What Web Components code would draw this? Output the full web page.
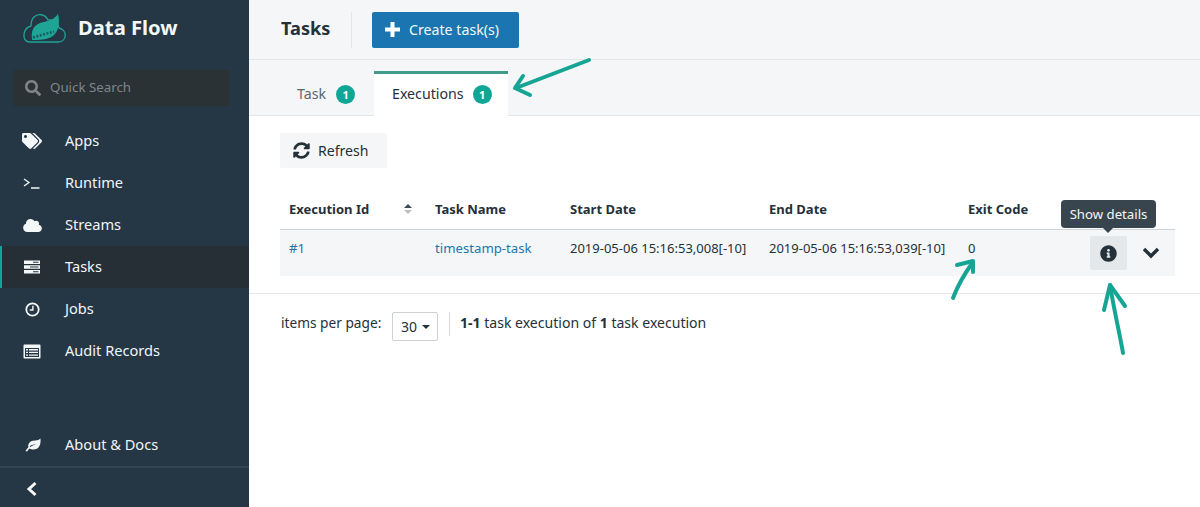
<!DOCTYPE html>
<html>
<head>
<meta charset="utf-8">
<title>Data Flow</title>
<style>
    html, body { margin: 0; height: 100%; }
    body { font-family: "Noto Sans", "Open Sans", sans-serif; overflow: hidden; }
</style>
</head>
<body>
<dataflow-app>
    <side-bar slot="side">
        <nav-item label="Apps" icon="tags"></nav-item>
        <nav-item label="Runtime" icon="terminal"></nav-item>
        <nav-item label="Streams" icon="cloud"></nav-item>
        <nav-item label="Tasks" icon="tasks" active></nav-item>
        <nav-item label="Jobs" icon="clock"></nav-item>
        <nav-item label="Audit Records" icon="list"></nav-item>
        <nav-item slot="bottom" label="About &amp; Docs" icon="leaf"></nav-item>
    </side-bar>
    <task-page slot="main"></task-page>
    <note-arrows slot="main"></note-arrows>
</dataflow-app>

<script>
const ICONS = {
    tags: '<svg viewBox="0 0 640 512" width="20" height="16" fill="currentColor"><path d="M497.941 225.941L286.059 14.059A48 48 0 0 0 252.118 0H48C21.49 0 0 21.49 0 48v204.118a48 48 0 0 0 14.059 33.941l211.882 211.882c18.744 18.745 49.136 18.746 67.882 0l204.118-204.118c18.745-18.745 18.745-49.137 0-67.882zM112 160c-26.51 0-48-21.49-48-48s21.49-48 48-48 48 21.49 48 48-21.49 48-48 48zm513.941 133.823L421.823 497.941c-18.745 18.745-49.137 18.745-67.882 0l-.36-.36L527.64 323.522c16.999-16.999 26.36-39.6 26.36-63.64s-9.362-46.641-26.36-63.64L331.397 0h48.721a48 48 0 0 1 33.941 14.059l211.882 211.882c18.745 18.745 18.745 49.137 0 67.882z"/></svg>',
    terminal: '<svg viewBox="0 0 18 14" width="18" height="14" fill="none" stroke="currentColor" stroke-width="1.3"><path d="M1 3l5 3.5L1 10M8 12h8.5"/></svg>',
    cloud: '<svg viewBox="0 0 640 512" width="19" height="15" fill="currentColor"><path d="M537.6 226.6c4.1-10.7 6.4-22.4 6.4-34.6 0-53-43-96-96-96-19.7 0-38.1 6-53.3 16.2C367 64.2 315.3 32 256 32c-88.4 0-160 71.6-160 160 0 2.7.1 5.4.2 8.1C40.2 219.8 0 273.2 0 336c0 79.5 64.5 144 144 144h368c70.7 0 128-57.3 128-128 0-61.9-44-113.6-102.4-125.4z"/></svg>',
    tasks: '<svg viewBox="0 0 18 14" width="18" height="14" fill="currentColor"><path d="M1 .5h16v3.4H1zM1 5.3h16v3.4H1zM1 10.1h16v3.4H1z"/><path d="M10 1.7h5.5v1H10zM7 6.5h8.5v1H7zM10 11.3h5.5v1H10z" fill="#253745"/></svg>',
    clock: '<svg viewBox="0 0 16 16" width="15" height="15" fill="none" stroke="currentColor"><circle cx="8" cy="8" r="6.6" stroke-width="1.9"/><path d="M8.4 4v4.6H5" stroke-width="1.5"/></svg>',
    list: '<svg viewBox="0 0 18 15" width="18" height="15" fill="currentColor"><path fill-rule="evenodd" d="M1.5 .5h15a1 1 0 0 1 1 1v12a1 1 0 0 1-1 1h-15a1 1 0 0 1-1-1v-12a1 1 0 0 1 1-1zM2 4v9h14V4z"/><path d="M3 5h2v1.4H3zM6 5h9v1.4H6zM3 7.7h2v1.4H3zM6 7.7h9v1.4H6zM3 10.4h2v1.4H3zM6 10.4h9v1.4H6z"/></svg>',
    leaf: '<svg viewBox="0 0 18 15" width="17" height="14" fill="currentColor"><path fill-rule="evenodd" d="M17.5 .5c.6 5-.6 9.8-4.6 11.3-2.7 1-5.3.4-7-.6-.9.8-1.9 1.9-2.7 3.3l-1.7-.5c.8-1.5 2-3 3.1-4.1C3.8 6.5 6 3.5 9.5 2.9c3-.5 6 0 8-2.4zM6.8 9.7c1.8-1.5 4.2-2.7 6.7-3.2-2.7.1-5.5 1-7.6 2.4z"/></svg>'
};

class DataflowApp extends HTMLElement {
    connectedCallback() {
        this.attachShadow({ mode: 'open' });
        this.shadowRoot.innerHTML = `
            <style>
                :host { display: grid; grid-template-columns: 249px 1fr; height: 507px; overflow: hidden; }
                .main { position: relative; min-width: 0; background: #fff; }
            </style>
            <slot name="side"></slot>
            <div class="main"><slot name="main"></slot></div>
        `;
    }
}

class SideBar extends HTMLElement {
    connectedCallback() {
        this.attachShadow({ mode: 'open' });
        this.shadowRoot.innerHTML = `
            <style>
                :host { display: flex; flex-direction: column; height: 507px; background: #253745; color: #f1f5f7; }
                .brand { display: flex; align-items: center; gap: 11px; height: 56px; padding-left: 21px; font-size: 20.2px; font-weight: 700; color: #f4f7f8; }
                .brand span { padding-bottom: 2px; }
                .search { display: flex; align-items: center; gap: 9px; height: 36px; margin: 14px 20px 14px 13px; padding-left: 12px; background: #2a3236; border-radius: 2px; color: #7f8588; font-size: 13.3px; }
                .search svg { display: block; }
                .search span { padding-bottom: 2px; }
                .nav { flex: 1; }
                .bottom { height: 42px; }
                .collapse { display: flex; align-items: center; height: 39px; padding-left: 26px; border-top: 2px solid #34434f; }
                .collapse svg { margin-top: 2px; }
            </style>
            <div class="brand">
                <svg width="46" height="32" viewBox="0 0 46 32">
                    <path d="M8 30h29c9 0 10-12 1-14-1-6-6-9-11-8C24 2 17 1 13 5c-3 3-3 6-3 9-8 2-10 15-2 16z" fill="none" stroke="#1ea595" stroke-width="1.3"/>
                    <path d="M37 2c2 8 1 16-4 21-4 4-11 5-21 5-1 0-1 0-1-1-1-8 1-13 8-16 7-2 13-2 18-9z" fill="#1ea595"/>
                    <path d="M12 25.5l21-6" stroke="#1c5a5e" stroke-width="2.5" stroke-dasharray="2 1.5"/>
                </svg>
                <span>Data Flow</span>
            </div>
            <div class="search">
                <svg viewBox="0 0 512 512" width="16" height="16" fill="currentColor"><path d="M505 442.7L405.3 343c-4.5-4.5-10.6-7-17-7H372c27.6-35.3 44-79.7 44-128C416 93.1 322.9 0 208 0S0 93.1 0 208s93.1 208 208 208c48.3 0 92.7-16.4 128-44v16.3c0 6.4 2.5 12.5 7 17l99.7 99.7c9.4 9.4 24.6 9.4 33.9 0l28.3-28.3c9.4-9.4 9.4-24.6.1-34zM208 336c-70.7 0-128-57.2-128-128 0-70.7 57.2-128 128-128 70.7 0 128 57.2 128 128 0 70.7-57.2 128-128 128z"/></svg>
                <span>Quick Search</span>
            </div>
            <div class="nav"><slot></slot></div>
            <div class="bottom"><slot name="bottom"></slot></div>
            <div class="collapse">
                <svg width="12" height="16" viewBox="0 0 12 16" fill="none" stroke="#f4f7f8" stroke-width="3"><path d="M9.5 2L3 8l6.5 6"/></svg>
            </div>
        `;
    }
}

class NavItem extends HTMLElement {
    connectedCallback() {
        this.attachShadow({ mode: 'open' });
        this.shadowRoot.innerHTML = `
            <style>
                :host { display: flex; align-items: center; height: 42px; font-size: 14.6px; border-left: 2px solid transparent; }
                :host([active]) { background: #252f35; border-left-color: #12a594; }
                .icon { display: flex; justify-content: center; width: 20px; margin-left: 20px; margin-right: 23px; color: #f4f7f8; }
                .text { padding-bottom: 3px; }
            </style>
            <span class="icon">${ICONS[this.getAttribute('icon')]}</span>
            <span class="text">${this.getAttribute('label').replace('&', '&amp;')}</span>
        `;
    }
}

class CountBadge extends HTMLElement {
    connectedCallback() {
        this.attachShadow({ mode: 'open' });
        this.shadowRoot.innerHTML = `
            <style>
                :host { display: inline-flex; align-items: center; justify-content: center; width: 19px; height: 19px; border-radius: 50%; background: #0fa697; color: #fff; font-size: 11px; font-weight: 700; }
            </style>
            <slot></slot>
        `;
    }
}

class TaskPage extends HTMLElement {
    connectedCallback() {
        this.attachShadow({ mode: 'open' });
        this.shadowRoot.innerHTML = `
            <style>
                :host { display: block; color: #253139; font-size: 14px; }
                a { color: #2376ab; text-decoration: none; font-size: 13.2px; }
                .top { display: flex; align-items: center; height: 59px; padding-left: 32px; background: #f5f6f7; border-bottom: 1px solid #e3e6e8; }
                .top h1 { margin: 0 0 3px; width: 70px; font-size: 18.2px; font-weight: 700; color: #253139; }
                .sep { width: 1px; height: 36px; background: #e3e6e8; margin-right: 20px; }
                .create { display: flex; align-items: center; gap: 9px; width: 147px; height: 36px; box-sizing: border-box; padding-left: 13px; background: #1b75b0; border-radius: 2px; color: #f3f8fb; font-size: 14.2px; }
                .tabs { display: flex; align-items: flex-end; height: 55px; padding-left: 31px; background: #f5f6f7; border-bottom: 1px solid #e3e6e8; }
                .tab { display: flex; align-items: center; height: 41px; gap: 10px; color: #5c666d; font-size: 14.2px; box-sizing: border-box; }
                .tab span { margin-bottom: 2px; }
                .tab.task { width: 94px; padding-left: 17px; }
                .tab.on { position: relative; top: 1px; width: 134px; height: 45px; padding-left: 18px; gap: 9px; background: #fff; border-top: 3px solid #409b8b; color: #253139; padding-bottom: 1px; }
                .body { padding: 17px 25px 0 31px; }
                .refresh { display: flex; align-items: center; gap: 8px; width: 107px; height: 35px; box-sizing: border-box; padding-left: 13px; padding-bottom: 1px; background: #f5f6f7; border-radius: 2px; font-size: 14.1px; color: #253139; }
                .row { display: grid; grid-template-columns: 146px 135px 199px 199px 1fr; padding-left: 9px; white-space: nowrap; }
                .head { margin-top: 22px; padding-bottom: 1px; box-sizing: border-box; height: 40px; align-items: center; font-weight: 700; font-size: 13px; border-bottom: 1px solid #cfd4d8; }
                .id { display: flex; align-items: center; }
                .sort { margin-left: 34px; }
                .data { position: relative; height: 37px; padding-top: 9px; background: #f4f6f7; font-size: 13px; }
                .info { position: absolute; left: 810px; top: 6px; display: flex; align-items: center; justify-content: center; width: 37px; height: 34px; background: #e4e8ea; border-radius: 2px; }
                .more { position: absolute; left: 862px; top: 17px; display: block; }
                .tip { position: absolute; left: 781px; top: -30px; box-sizing: border-box; width: 95px; height: 28px; display: flex; align-items: center; justify-content: center; background: #38454f; border-radius: 4px; color: #f3f5f6; font-size: 13.2px; }
                .tip::after { content: ""; position: absolute; left: 42px; bottom: -5px; border: 5px solid transparent; border-bottom: 0; border-top-color: #38454f; }
                .rule { height: 1px; margin-top: 17px; background: #e6e8ea; }
                .pager { display: flex; align-items: flex-start; padding: 18px 0 0 32px; font-size: 14px; }
                .pager span.lbl { width: 111px; height: 24px; line-height: 22px; font-size: 13.7px; }
                .select { display: flex; align-items: center; gap: 5px; width: 46px; height: 29px; box-sizing: border-box; padding-left: 8px; border: 1px solid #cdd1d4; border-radius: 2px; margin-right: 11px; font-size: 14px; }
                .select i { border: 4px solid transparent; border-bottom: 0; border-top-color: #253139; }
                .bar { width: 1px; height: 24px; background: #d9dcde; margin-right: 10px; }
                .count { height: 24px; line-height: 22px; font-size: 14.05px; }
            </style>
            <div class="top">
                <h1>Tasks</h1>
                <span class="sep"></span>
                <div class="create">
                    <svg width="15" height="15" viewBox="0 0 15 15" fill="#fff"><path d="M5.5 0h4v5.5H15v4H9.5V15h-4V9.5H0v-4h5.5z"/></svg>
                    <span>Create task(s)</span>
                </div>
            </div>
            <div class="tabs">
                <div class="tab task"><span>Task</span><count-badge>1</count-badge></div>
                <div class="tab on"><span>Executions</span><count-badge>1</count-badge></div>
            </div>
            <div class="body">
                <div class="refresh">
                    <svg viewBox="0 0 512 512" width="17" height="17" fill="#253139"><path d="M370.72 133.28C339.458 104.008 298.888 87.962 255.848 88c-77.458.068-144.328 53.178-162.791 126.85-1.344 5.363-6.122 9.15-11.651 9.15H24.103c-7.498 0-13.194-6.807-11.807-14.176C33.933 94.924 134.813 8 256 8c66.448 0 126.791 26.136 171.315 68.685L463.03 40.97C478.149 25.851 504 36.559 504 57.941V192c0 13.255-10.745 24-24 24H345.941c-21.382 0-32.09-25.851-16.971-40.971l41.75-41.749zM32 296h134.059c21.382 0 32.09 25.851 16.971 40.971l-41.75 41.75c31.262 29.273 71.835 45.319 114.876 45.28 77.418-.07 144.315-53.144 162.787-126.849 1.344-5.363 6.122-9.15 11.651-9.15h57.304c7.498 0 13.194 6.807 11.807 14.176C478.067 417.076 377.187 504 256 504c-66.448 0-126.791-26.136-171.315-68.685L48.97 471.03C33.851 486.149 8 475.441 8 454.059V320c0-13.255 10.745-24 24-24z"/></svg>
                    <span>Refresh</span>
                </div>
                <div class="row head">
                    <div class="id"><span>Execution Id</span>
                        <svg class="sort" width="10" height="12" viewBox="0 0 10 12"><path d="M1 5l4-4 4 4z" fill="#3c4850"/><path d="M1 7l4 4 4-4z" fill="#b9bfc3"/></svg>
                    </div>
                    <div>Task Name</div><div>Start Date</div><div>End Date</div><div>Exit Code</div>
                </div>
                <div class="row data">
                    <div><a>#1</a></div>
                    <div><a>timestamp-task</a></div>
                    <div>2019-05-06 15:16:53,008[-10]</div>
                    <div>2019-05-06 15:16:53,039[-10]</div>
                    <div>0</div>
                    <div class="tip">Show details</div>
                    <div class="info">
                        <svg viewBox="0 0 512 512" width="17" height="17" fill="#253139"><path d="M256 8C119.043 8 8 119.083 8 256c0 136.997 111.043 248 248 248s248-111.003 248-248C504 119.083 392.957 8 256 8zm0 110c23.196 0 42 18.804 42 42s-18.804 42-42 42-42-18.804-42-42 18.804-42 42-42zm56 254c0 6.627-5.373 12-12 12h-88c-6.627 0-12-5.373-12-12v-24c0-6.627 5.373-12 12-12h12v-64h-12c-6.627 0-12-5.373-12-12v-24c0-6.627 5.373-12 12-12h64c6.627 0 12 5.373 12 12v100h12c6.627 0 12 5.373 12 12v24z"/></svg>
                    </div>
                    <svg class="more" width="18" height="12" viewBox="0 0 18 12" fill="none" stroke="#253139" stroke-width="3.4"><path d="M2 2l7 7 7-7"/></svg>
                </div>
            </div>
            <div class="rule"></div>
            <div class="pager">
                <span class="lbl">items per page:</span>
                <div class="select"><span>30</span><i></i></div>
                <span class="bar"></span>
                <span class="count"><b>1-1</b> task execution of <b>1</b> task execution</span>
            </div>
        `;
    }
}

// hand drawn marker arrows sitting on top of the screenshot
class NoteArrows extends HTMLElement {
    connectedCallback() {
        this.attachShadow({ mode: 'open' });
        this.shadowRoot.innerHTML = `
            <style>
                :host { position: absolute; inset: 0; pointer-events: none; }
                svg { display: block; }
            </style>
            <svg width="951" height="507" viewBox="249 0 951 507" fill="none" stroke="#16a594" stroke-width="4" stroke-linecap="round" stroke-linejoin="round">
                <path d="M589 60L516 88"/>
                <path d="M523 76L515 88 530 95"/>
                <path d="M953 298C958 285 965 273 973 262"/>
                <path d="M957 265L973 261 973 272"/>
                <path d="M1123 353C1120 335 1114 310 1110 285"/>
                <path d="M1104 310L1110 285 1125 306"/>
            </svg>
        `;
    }
}

customElements.define('dataflow-app', DataflowApp);
customElements.define('side-bar', SideBar);
customElements.define('nav-item', NavItem);
customElements.define('count-badge', CountBadge);
customElements.define('task-page', TaskPage);
customElements.define('note-arrows', NoteArrows);
</script>
</body>
</html>
